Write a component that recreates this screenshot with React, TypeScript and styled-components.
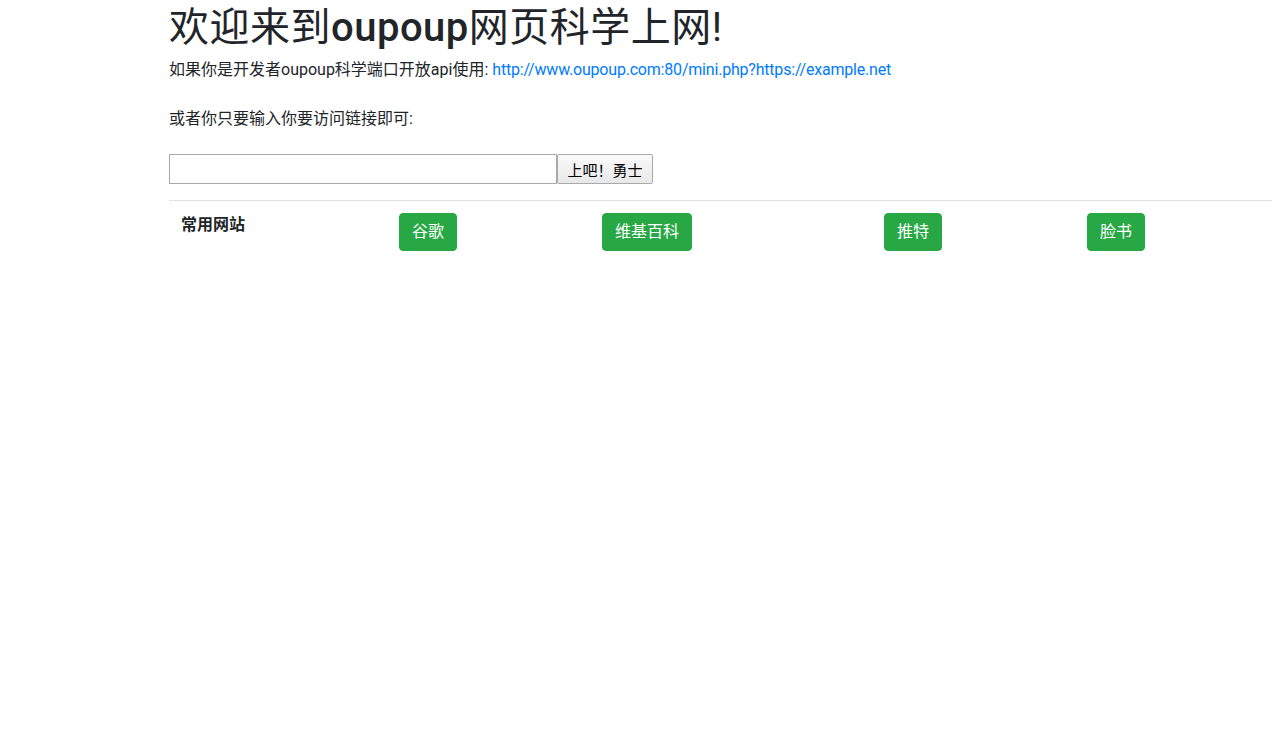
import React from 'react';
import styled, { createGlobalStyle } from 'styled-components';

const GlobalStyle = createGlobalStyle`
  html, body {
    margin: 0;
    padding: 0;
    background: #fff;
  }
  body {
    font-family: Roboto, "Noto Sans CJK SC", sans-serif;
    font-size: 16px;
    line-height: 1.5;
    color: #212529;
  }
`;

const sites = [
  { name: '谷歌', url: 'https://www.google.com' },
  { name: '维基百科', url: 'https://www.wikipedia.org' },
  { name: '推特', url: 'https://twitter.com' },
  { name: '脸书', url: 'https://www.facebook.com' },
];

const App = () => {
  return (
    <Page>
      <GlobalStyle />
      <Title>
        欢迎来到<Brand>oupoup</Brand>网页科学上网!
      </Title>
      <Intro>
        如果你是开发者oupoup科学端口开放api使用:{' '}
        <Link href="#">http://www.oupoup.com:80/mini.php?https://example.net</Link>
      </Intro>
      <Hint>或者你只要输入你要访问链接即可:</Hint>
      <SearchForm onSubmit={(e) => e.preventDefault()}>
        <UrlInput type="text" />
        <GoButton type="submit">上吧！勇士</GoButton>
      </SearchForm>
      <SiteTable>
        <tbody>
          <tr>
            <HeadCell>常用网站</HeadCell>
            {sites.map((site) => (
              <Cell key={site.name}>
                <SiteButton href="#">{site.name}</SiteButton>
              </Cell>
            ))}
          </tr>
        </tbody>
      </SiteTable>
    </Page>
  );
};

export default App;

const Page = styled.div`
  padding-left: 169px;
`;

const Title = styled.h1`
  margin: 3px 0 5px;
  font-size: 40px;
  font-weight: 400;
  line-height: 50px;
  letter-spacing: 0.5px;
`;

const Brand = styled.span`
  font-weight: 500;
`;

const Intro = styled.p`
  margin: 0 0 25px;
  line-height: 24px;
`;

const Link = styled.a`
  color: #007bff;
  text-decoration: none;
  letter-spacing: -0.2px;
`;

const Hint = styled.p`
  margin: 0 0 23px;
  line-height: 24px;
`;

const SearchForm = styled.form`
  display: flex;
  margin: 0 0 16px;
`;

const UrlInput = styled.input`
  box-sizing: border-box;
  width: 388px;
  height: 30px;
  margin: 0;
  padding: 2px 4px;
  border: 1px solid #a9a9a9;
  font-size: 15px;
  outline: none;
`;

const GoButton = styled.button`
  box-sizing: border-box;
  width: 96px;
  height: 30px;
  margin: 0;
  padding: 0 6px;
  border: 1px solid #a9a9a9;
  border-radius: 2px;
  background: linear-gradient(#fafafa, #e8e8e8);
  color: #000;
  font-family: "Noto Sans CJK SC", sans-serif;
  font-size: 15px;
  cursor: pointer;
`;

const SiteTable = styled.table`
  width: 100%;
  border-collapse: collapse;
  border-top: 1px solid #dee2e6;
`;

const HeadCell = styled.th`
  width: 194px;
  padding: 12px;
  text-align: left;
  vertical-align: top;
  font-weight: 700;
`;

const Cell = styled.td`
  padding: 12px;
  vertical-align: top;
  &:nth-child(2) { width: 179px; }
  &:nth-child(3) { width: 258px; }
  &:nth-child(4) { width: 179px; }
`;

const SiteButton = styled.a`
  display: inline-block;
  padding: 6px 12px;
  border: 1px solid #28a745;
  border-radius: 4px;
  background: #28a745;
  color: #fff;
  font-size: 16px;
  line-height: 24px;
  text-decoration: none;
`;
